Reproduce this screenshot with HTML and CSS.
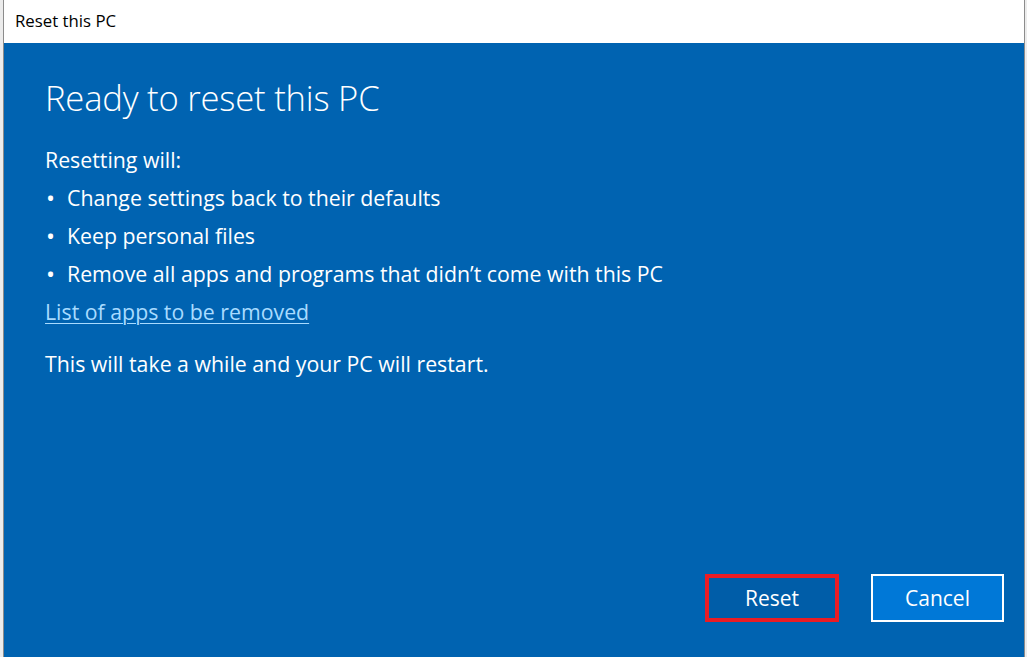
FILE: index.html
```html
<!DOCTYPE html>
<html lang="en">
<head>
<meta charset="utf-8">
<title>Reset this PC</title>
<link rel="stylesheet" href="styles.css">
</head>
<body>
<div class="window">
  <div class="titlebar">Reset this PC</div>
  <div class="content">
    <div class="main">
      <h1 class="heading">Ready to reset this PC</h1>
      <p class="lead">Resetting will:</p>
      <ul class="list">
        <li>Change settings back to their defaults</li>
        <li>Keep personal files</li>
        <li>Remove all apps and programs that didn’t come with this PC</li>
      </ul>
      <a class="link" href="#">List of apps to be removed</a>
      <p class="note">This will take a while and your PC will restart.</p>
    </div>
    <div class="actions">
      <button class="btn btn-reset">Reset</button>
      <button class="btn btn-cancel">Cancel</button>
    </div>
  </div>
</div>
</body>
</html>
```

FILE: styles.css
```css
* { box-sizing: border-box; }
html, body { margin: 0; padding: 0; height: 100%; }
body {
  background: #ececec;
  font-family: "Open Sans", "Noto Sans", "Liberation Sans", sans-serif;
  overflow: hidden;
}
.window {
  height: 657px;
  margin: 0 2px 0 3px;
  border-left: 1px solid #8c8c8c;
  border-right: 1px solid #8c8c8c;
  display: flex;
  flex-direction: column;
}
.titlebar {
  height: 43px;
  background: #ffffff;
  color: #000;
  font-size: 16.8px;
  padding: 9px 0 0 11px;
  line-height: 24px;
}
.content {
  flex: 1;
  background: #0063b1;
  color: #fff;
  display: flex;
  flex-direction: column;
  padding: 0 20px 35px 41px;
}
.main { flex: 1; }
.heading {
  margin: 32px 0 0 0;
  font-weight: 300;
  font-size: 34.6px;
  line-height: 46px;
  letter-spacing: -0.2px;
}
.lead {
  margin: 26px 0 0 0;
  font-size: 21.3px;
  line-height: 26px;
}
.list {
  list-style: none;
  margin: 0;
  padding: 0;
  font-size: 21.3px;
}
.list li {
  margin-top: 12px;
  line-height: 26px;
  display: flex;
}
.list li::before {
  content: "•";
  width: 21px;
  flex: none;
  font-size: 24px;
  padding-left: 1px;
}
.link {
  display: inline-block;
  margin-top: 12px;
  font-size: 21.3px;
  line-height: 26px;
  color: #a8dbff;
  text-decoration: underline;
  text-underline-offset: 3px;
  text-decoration-thickness: 1px;
}
.note {
  margin: 26px 0 0 0;
  font-size: 21.3px;
  line-height: 26px;
}
.actions {
  display: flex;
  justify-content: flex-end;
  gap: 32px;
}
.btn {
  height: 48px;
  font-family: inherit;
  font-size: 21px;
  color: #fff;
  cursor: pointer;
  padding: 0;
}
.btn-reset {
  width: 134px;
  background: #005da8;
  border: 4px solid #ea1c24;
}
.btn-cancel {
  width: 133px;
  background: #0078d7;
  border: 2px solid #ffffff;
}
```
